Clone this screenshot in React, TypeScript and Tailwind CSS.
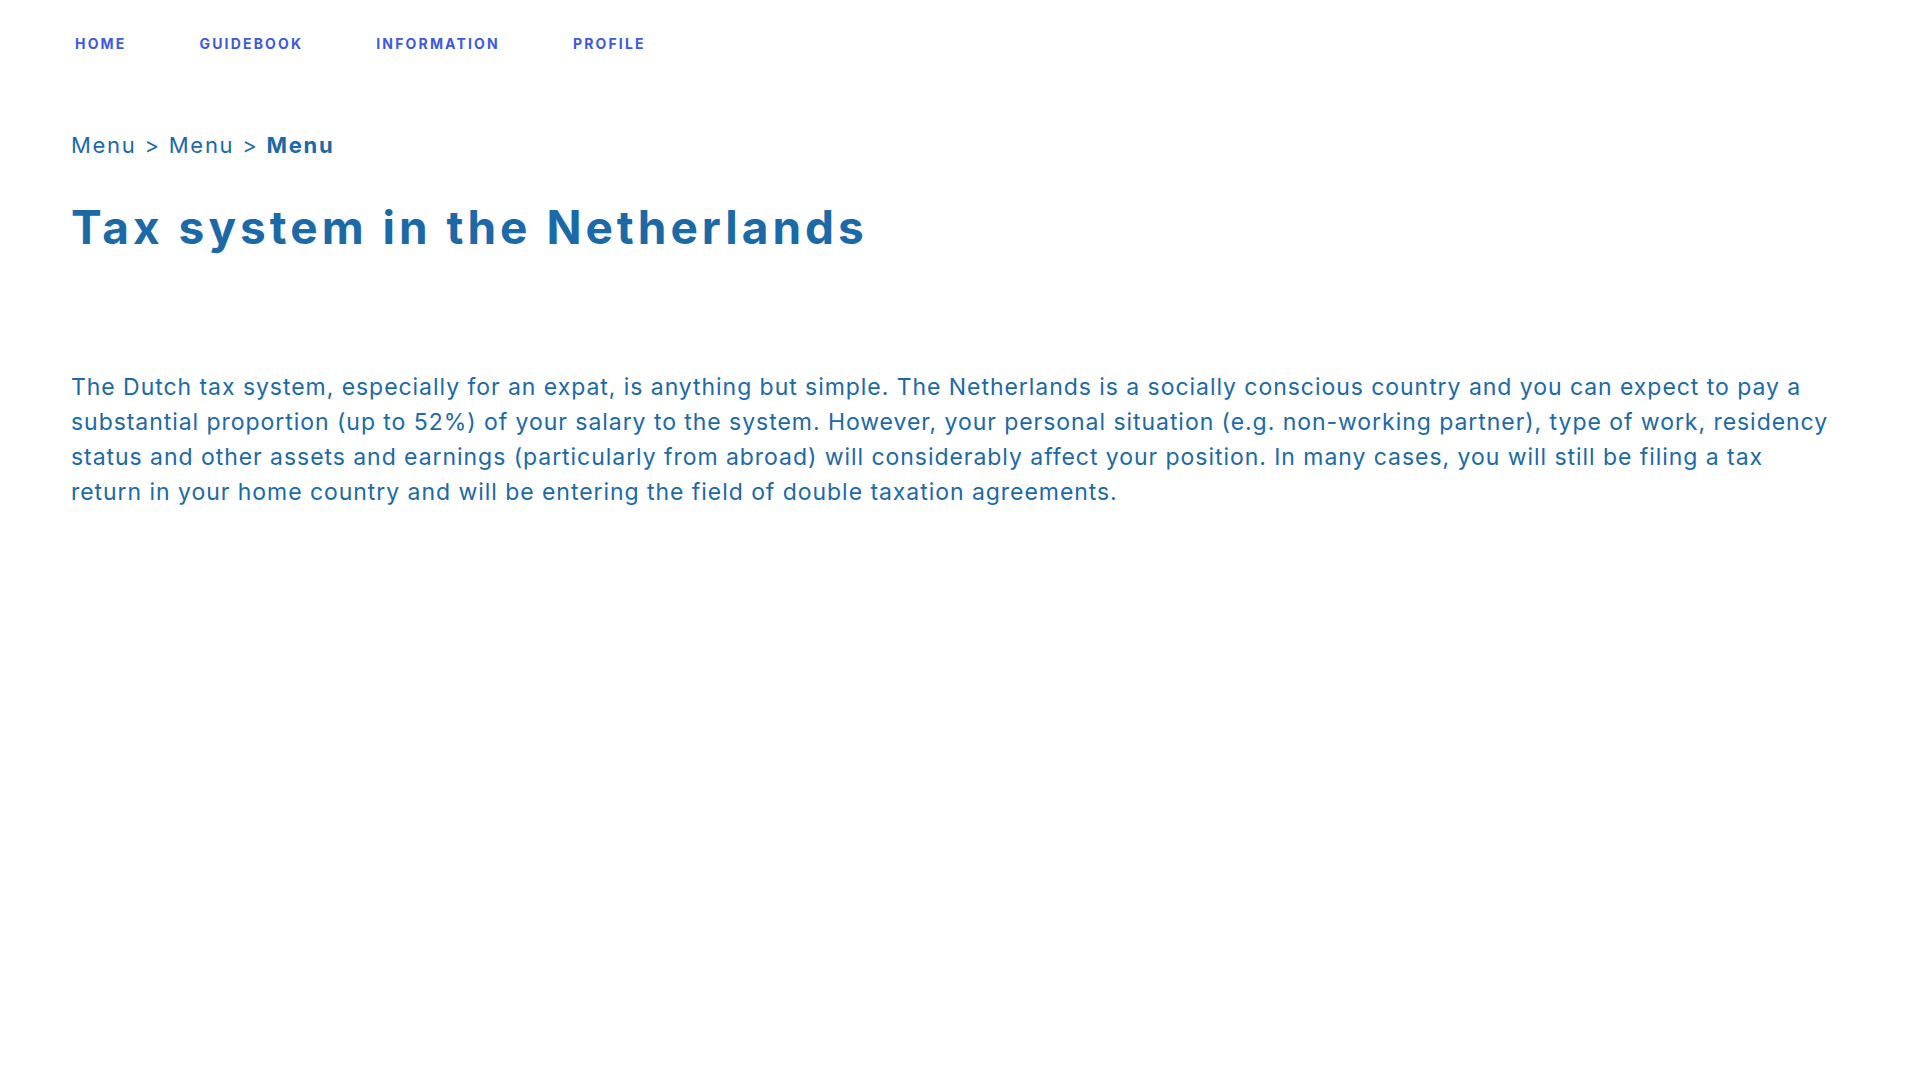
import React from "react";

export default function App() {
  const nav = ["HOME", "GUIDEBOOK", "INFORMATION", "PROFILE"];
  return (
    <div className="min-h-screen w-full bg-white text-[#1b69a6]" style={{ fontFamily: "Inter, 'Open Sans', sans-serif" }}>
      <nav className="flex h-[86px] items-center gap-[73px] pl-[75px]">
        {nav.map((n) => (
          <a key={n} className="text-[14px] font-bold tracking-[0.155em] text-[#3d59e0]">
            {n}
          </a>
        ))}
      </nav>
      <main className="px-[71px]">
        <div className="mt-[44px] text-[22px] leading-[30px] tracking-[1.7px]">
          <span>Menu</span>
          <span className="mx-[8px]">&gt;</span>
          <span>Menu</span>
          <span className="mx-[8px]">&gt;</span>
          <span className="font-bold">Menu</span>
        </div>
        <h1 className="mt-[39px] text-[46px] font-bold leading-[56px] tracking-[4px]">Tax system in the Netherlands</h1>
        <p className="mt-[115px] max-w-[1764px] text-[23px] leading-[35px] tracking-[0.95px]">
          The Dutch tax system, especially for an expat, is anything but simple. The Netherlands is a socially conscious country and you can expect to pay a substantial proportion (up to 52%) of your salary to the system. However, your personal situation (e.g. non-working partner), type of work, residency status and other assets and earnings (particularly from abroad) will considerably affect your position. In many cases, you will still be filing a tax return in your home country and will be entering the field of double taxation agreements.
        </p>
      </main>
    </div>
  );
}
